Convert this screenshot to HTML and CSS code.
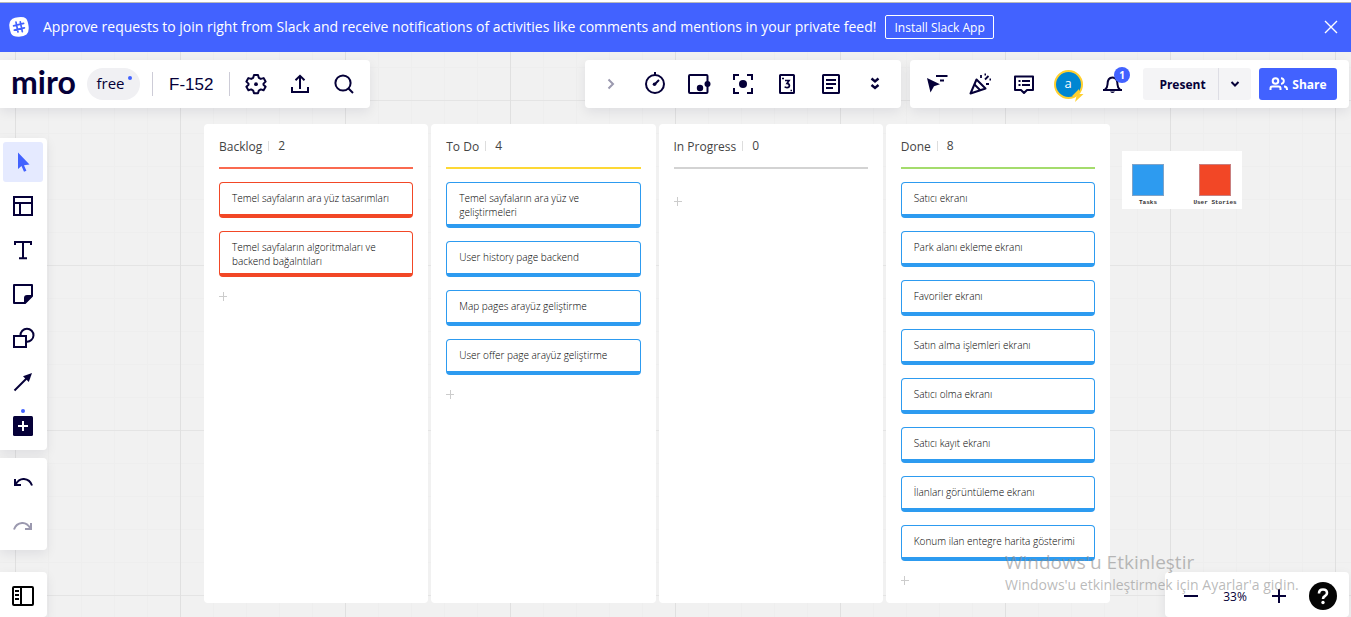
FILE: index.html
```html
<!DOCTYPE html>
<html lang="tr">
<head>
<meta charset="utf-8">
<title>F-152</title>
<link rel="stylesheet" href="styles.css">
</head>
<body>
<div class="banner">
  <svg class="banner-logo" viewBox="0 0 20 20"><path d="M6 .8Q14-.9 17 1.4 18.600 3 19.400 8 20.600 15 17.500 17.500 15 19.200 10 19.800 4 20 2 16.500.3 12 .2 8 .3 2.500 6 .8Z" fill="#fff"/><path d="M7 5.200l2 9.800M11.300 4.800l2 9.800M4.600 8.800l10-2.400M5.400 13.200l10-2.400" stroke="#4262ff" stroke-width="1.700" stroke-linecap="round" fill="none"/></svg>
  <p class="banner-text">Approve requests to join right from Slack and receive notifications of activities like comments and mentions in your private feed!</p>
  <button class="banner-action">Install Slack App</button>
  <button class="banner-close" aria-label="Close"><svg viewBox="0 0 14 14"><path d="M1 1l12 12M13 1L1 13" stroke="#fff" stroke-width="1.400"/></svg></button>
</div>
<main class="stage">
  <section class="board">
    <article class="column">
      <h2 class="column-head">Backlog<span class="count">2</span></h2>
      <div class="cards red">
        <div class="card">Temel sayfaların ara yüz tasarımları</div>
        <div class="card">Temel sayfaların algoritmaları ve backend bağalntıları</div>
      </div>
      <button class="add" aria-label="Add card"></button>
    </article>
    <article class="column">
      <h2 class="column-head yellow">To Do<span class="count">4</span></h2>
      <div class="cards">
        <div class="card">Temel sayfaların ara yüz ve geliştirmeleri</div>
        <div class="card">User history page backend</div>
        <div class="card">Map pages arayüz geliştirme</div>
        <div class="card">User offer page arayüz geliştirme</div>
      </div>
      <button class="add" aria-label="Add card"></button>
    </article>
    <article class="column">
      <h2 class="column-head grey">In Progress<span class="count">0</span></h2>
      <div class="cards"></div>
      <button class="add" aria-label="Add card"></button>
    </article>
    <article class="column">
      <h2 class="column-head green">Done<span class="count">8</span></h2>
      <div class="cards">
        <div class="card">Satıcı ekranı</div>
        <div class="card">Park alanı ekleme ekranı</div>
        <div class="card">Favoriler ekranı</div>
        <div class="card">Satın alma işlemleri ekranı</div>
        <div class="card">Satıcı olma ekranı</div>
        <div class="card">Satıcı kayıt ekranı</div>
        <div class="card">İlanları görüntüleme ekranı</div>
        <div class="card">Konum ilan entegre harita gösterimi</div>
      </div>
      <button class="add" aria-label="Add card"></button>
    </article>
  </section>
  <figure class="legend">
    <div class="legend-item"><span class="swatch"></span>Tasks</div>
    <div class="legend-item"><span class="swatch swatch-red"></span>User Stories</div>
  </figure>

  <div class="chrome">
    <header class="topbar">
      <div class="panel board-info">
        <a class="logo" href="#">miro</a>
        <button class="plan">free<i class="dot"></i></button>
        <span class="rule"></span>
        <button class="board-name">F-152</button>
        <span class="rule"></span>
        <div class="tools">
          <button class="tool" aria-label="Settings"><svg viewBox="0 0 24 24"><path d="M10 3h4l.8 2.800 2 1.100 2.800-.8 2 3.500-2.100 2v1.200l2.100 2-2 3.400-2.800-.8-2 1.200L14 21.300h-4l-.8-2.700-2-1.200-2.800.8-2-3.400 2.100-2v-1.200l-2.100-2 2-3.500 2.800.8 2-1.100Z" stroke-linejoin="round"/><circle cx="12" cy="12.200" r="1.900" class="solid"/></svg></button>
          <button class="tool" aria-label="Export"><svg viewBox="0 0 24 24"><path d="M4 15v5h16v-5M12 17V4M7.500 8.200L12 3.800l4.500 4.400"/></svg></button>
          <button class="tool" aria-label="Search"><svg viewBox="0 0 24 24"><circle cx="11" cy="11" r="7.600"/><path d="M16.500 16.500l4.500 4.500"/></svg></button>
        </div>
      </div>
      <div class="panel center-tools">
        <button class="tool muted" aria-label="Collapse"><svg viewBox="0 0 24 24"><path d="M9.500 7.500L14 12l-4.500 4.500"/></svg></button>
        <button class="tool" aria-label="Timer"><svg viewBox="0 0 24 24"><circle cx="12" cy="12" r="9"/><path d="M12 0v3M12 12l4-4"/><circle cx="11.500" cy="12.300" r="1.800" class="solid"/></svg></button>
        <button class="tool" aria-label="Voting"><svg viewBox="0 0 24 24"><rect x="2" y="3" width="18.500" height="18" rx="1"/><circle cx="13" cy="16" r="3.200" class="solid"/><circle cx="20.500" cy="12" r="3" class="solid"/></svg></button>
        <button class="tool" aria-label="Focus"><svg viewBox="0 0 24 24"><path d="M3 8V3h5M16 3h5v5M21 16v5h-5M8 21H3v-5"/><circle cx="12" cy="12" r="4" class="solid"/></svg></button>
        <button class="tool" aria-label="Estimation"><svg viewBox="0 0 24 24"><rect x="5" y="3" width="14" height="18" rx=".5"/><path d="M10 8.500h4l-2 3q2.400.2 2.400 2.100 0 2.100-2.400 2.100-1.700 0-2.200-1" stroke-width="1.700"/><path d="M7 6.500h2M15.500 18.500h1.500" stroke-width="1.500"/></svg></button>
        <button class="tool" aria-label="Notes"><svg viewBox="0 0 24 24"><rect x="4" y="3" width="16" height="18" rx=".5"/><path d="M7 8h10M7 12h10M7 16h7"/></svg></button>
        <button class="tool" aria-label="More tools"><svg viewBox="0 0 24 24"><path d="M8.500 6.500L12 9.500l3.500-3M8.500 13l3.500 3 3.500-3" stroke-width="2.400"/></svg></button>
      </div>
      <div class="panel right-tools">
        <button class="tool" aria-label="Cursors"><svg viewBox="0 0 24 24"><path class="solid" d="M3 6l13 6.200-6 2L6.500 20.500Z"/><path d="M12 4h11.500M16 8.500h4"/></svg></button>
        <button class="tool" aria-label="Reactions"><svg viewBox="0 0 24 24"><path d="M8.500 7.500l9 9L2.500 21.500Z" stroke-linejoin="round"/><path d="M6.500 12.500l6 6"/><path d="M13 6V3M17 7.500L20.500 4M18 12h3M21.500 7.500h1.500M16.500 2.500h1.500" stroke-width="1.800"/></svg></button>
        <button class="tool" aria-label="Comments"><svg viewBox="0 0 24 24"><path d="M3 4.500h18v13.500h-6l-3 3-3-3H3Z" stroke-linejoin="round"/><path d="M6.500 9h2M10 9h8M6.500 13h2M10 13h8"/></svg></button>
        <button class="tool" aria-label="Profile"><span class="avatar">a</span><svg class="bolt" viewBox="0 0 12 13"><path d="M7 0L0 7h4.500L3 13l8.500-8H7Z" fill="#ffd02f"/></svg></button>
        <button class="tool" aria-label="Notifications"><svg viewBox="0 0 24 24"><path d="M3 18h19M5 17.500q2.500-2 2.500-5 0-7 5-7 5 0 5 7 0 3 2.500 5"/><path d="M10 19.500h5q-2.500 3-5 0Z" class="solid"/></svg><span class="badge">1</span></button>
        <div class="present"><button class="present-main">Present</button><button class="present-more" aria-label="Present options"><svg viewBox="0 0 10 8"><path d="M1.500 2L5 5.500 8.500 2" fill="none" stroke="#050038" stroke-width="2"/></svg></button></div>
        <button class="share"><svg viewBox="0 0 20 16"><circle cx="6.500" cy="5" r="2.800"/><path d="M1.500 14v-1.500q0-2 2-2h6q2 0 2 2V14M12 2.200a2.800 2.800 0 1 1 0 5.600M15 10.500q3 0 3 3V14"/></svg>Share</button>
      </div>
    </header>
    <div class="lower">
      <nav class="side">
        <div class="panel stack">
          <button class="tool active" aria-label="Select"><svg viewBox="0 0 24 24"><path d="M7 2.500V19l3.500-3 2.500 5.800 2.400-1L13 15.200l5.500-.7Z" fill="#4262ff" stroke="none"/></svg></button>
          <button class="tool" aria-label="Templates"><svg viewBox="0 0 24 24"><rect x="3" y="3" width="18" height="18"/><path d="M3 9h18M9 9v12"/></svg></button>
          <button class="tool" aria-label="Text"><svg viewBox="0 0 24 24"><path d="M4 7V4h16v3M12 4v16M8 20.200h8"/></svg></button>
          <button class="tool" aria-label="Sticky note"><svg viewBox="0 0 24 24"><path d="M3 3h18v11l-7 7H3Z" stroke-linejoin="round"/><path class="solid" d="M13 21v-5q0-3 3-3h5.500L14 21.500Z"/></svg></button>
          <button class="tool" aria-label="Shapes"><svg viewBox="0 0 24 24"><rect x="3" y="10" width="12" height="11"/><path d="M9.500 9.500a6.500 6.500 0 1 1 6 6.200"/></svg></button>
          <button class="tool" aria-label="Line"><svg viewBox="0 0 24 24"><path d="M3.500 20.500L17 7"/><path class="solid" d="M21 3l-9 3.200 5.800 5.800Z"/></svg></button>
          <button class="tool" aria-label="More apps"><svg viewBox="0 0 24 24"><rect class="solid" x="2" y="2" width="20" height="20" rx="1.500"/><path d="M12 7v10M7 12h10" stroke="#fff"/></svg><i class="dot"></i></button>
        </div>
        <div class="panel stack">
          <button class="tool" aria-label="Undo"><svg viewBox="0 0 24 24"><path d="M4 9v6h6M4.500 14.500Q8 8.500 13 9q6 .5 8 6.500"/></svg></button>
          <button class="tool muted" aria-label="Redo"><svg viewBox="0 0 24 24"><path d="M20 9v6h-6M19.500 14.500Q16 8.500 11 9q-6 .5-8 6.500"/></svg></button>
        </div>
        <div class="panel stack docked">
          <button class="tool black" aria-label="Frames"><svg viewBox="0 0 24 24"><rect x="2" y="3" width="20" height="18" rx="1"/><path d="M10 3v18M4 7h4M4 11h4M4 15h4"/></svg></button>
        </div>
      </nav>
      <div class="panel zoom">
        <button class="tool" aria-label="Zoom out"><svg viewBox="0 0 24 24"><path d="M5 12h14"/></svg></button>
        <button class="tool zoom-value">33%</button>
        <button class="tool" aria-label="Zoom in"><svg viewBox="0 0 24 24"><path d="M5 12h14M12 5v14"/></svg></button>
        <button class="tool" aria-label="Help"><svg class="help" viewBox="0 0 28 28"><circle cx="14" cy="14" r="14" fill="#050505" stroke="none"/><path d="M10 11.500q0-4 4-4 4 0 4 3.500 0 2-2 3-2 1-2 3" stroke="#fff" stroke-width="2.600"/><circle cx="14" cy="20.500" r="1.700" fill="#fff" stroke="none"/></svg></button>
      </div>
    </div>
  </div>
  <aside class="activation"><p class="activation-title">Windows'u Etkinleştir</p><p class="activation-note">Windows'u etkinleştirmek için Ayarlar'a gidin.</p></aside>
</main>
</body>
</html>
```
FILE: styles.css
```css
* { box-sizing: border-box; }
body {
  margin: 0;
  height: 100vh;
  display: flex;
  flex-direction: column;
  overflow: hidden;
  font-family: "Open Sans", "Noto Sans", sans-serif;
  color: #050038;
}
button { font: inherit; color: inherit; border: 0; background: none; padding: 0; cursor: pointer; }
p, h2, figure { margin: 0; }

.banner {
  display: flex;
  align-items: center;
  height: 52px;
  padding: 0 13px 0 9px;
  border-top: 2px solid #fff;
  background: #4262ff;
  box-shadow: inset 0 1px #b9b9b9;
  color: #fff;
}
.banner-logo { width: 20px; height: 20px; margin-right: 14px; }
.banner-text { font-size: 14px; line-height: 20px; white-space: nowrap; }
.banner-action {
  height: 24px;
  margin-left: 9px;
  padding: 0 8px;
  border: 1px solid #fff;
  border-radius: 2px;
  font-size: 12px;
  white-space: nowrap;
}
.banner-close { margin-left: auto; width: 14px; height: 14px; display: flex; }

.stage {
  position: relative;
  flex: 1;
  overflow: hidden;
  background-color: #f1f1f1;
  background-image:
    linear-gradient(90deg, #e0e0e0 1px, transparent 1px),
    linear-gradient(#e4e4e4 1px, transparent 1px),
    linear-gradient(90deg, #eee 1px, transparent 1px),
    linear-gradient(#eee 1px, transparent 1px);
  background-size: 165px 165px, 165px 165px, 33px 33px, 33px 33px;
  background-position: 15px 48px;
}

.board {
  position: absolute;
  left: 204px;
  top: 72px;
  width: 906px;
  height: 479px;
  display: grid;
  grid-template-columns: repeat(4, 1fr);
  gap: 3px;
}
.column { padding: 12px 15px; background: #fff; border-radius: 4px; }
.column-head {
  display: flex;
  align-items: center;
  height: 33px;
  padding-bottom: 11px;
  border-bottom: 2px solid #fa6a50;
  font-size: 12px;
  font-weight: 400;
  color: #444;
}
.yellow { border-color: #fdd835; }
.grey { border-color: #d3d3d3; }
.green { border-color: #a4dc6c; }
.count { margin-left: 6px; padding-left: 9px; line-height: 10px; border-left: 1px solid #ddd; }
.cards { display: flex; flex-direction: column; gap: 13px; padding-top: 13px; }
.card {
  min-height: 36px;
  padding: 8px 12px 5px;
  border: 1px solid #2d9bf0;
  border-bottom-width: 4px;
  border-radius: 4px;
  font-size: 10px;
  font-weight: 300;
  line-height: 14px;
  color: #000;
}
.red .card { border-color: #f24726; }
.add { display: block; margin-top: 15px; width: 8px; height: 9px;
  background:
    linear-gradient(#ccc, #ccc) center / 9px 1px no-repeat,
    linear-gradient(#ccc, #ccc) center / 1px 9px no-repeat;
}

.legend {
  position: absolute;
  left: 1122px;
  top: 99px;
  width: 120px;
  height: 58px;
  padding: 13px 1px 0 0;
  display: flex;
  justify-content: space-between;
  background: #fff;
  font: bold 6px/8px "Liberation Mono", monospace;
  color: #333;
}
.legend-item { display: flex; flex-direction: column; align-items: center; gap: 3px; width: 52px; white-space: nowrap; }
.swatch { width: 32px; height: 32px; background: #2d9bf0; border: 1px solid #7fa3c8; }
.swatch-red { background: #f24726; border-color: #c97f7f; }

.chrome { position: absolute; inset: 0; display: flex; flex-direction: column; padding-right: 2px; }
.topbar { display: flex; padding-top: 8px; }
.panel { background: #fff; border-radius: 4px; box-shadow: 0 4px 12px rgba(5, 0, 56, 0.08); }
.board-info, .center-tools, .right-tools { display: flex; align-items: center; height: 48px; padding: 0 4px; }
.board-info { padding-left: 11px; border-radius: 0 4px 4px 0; }
.center-tools { margin-left: auto; }
.right-tools { margin-left: 9px; padding-right: 12px; }
.tools { display: flex; }
.logo { width: 76px; font: 700 32px/40px Lato, sans-serif; color: #050038; text-decoration: none; padding-bottom: 5px; }
.plan { position: relative; width: 53px; height: 32px; padding: 0 6px 2px 0; border-radius: 16px; background: #f0f0f3; font-size: 15px; font-weight: 500; }
.dot { position: absolute; width: 4px; height: 4px; border-radius: 50%; background: #4262ff; }
.plan .dot { right: 8px; top: 8px; }
.rule { width: 1px; height: 24px; background: #cdccd7; margin: 0 4px 0 12px; }
.board-name { width: 60px; height: 32px; font: 17px/32px "Liberation Sans", Arial, sans-serif; text-align: left; padding: 1px 0 0 12px; white-space: nowrap; }
.tool { position: relative; width: 44px; height: 40px; display: flex; align-items: center; justify-content: center; border-radius: 3px; }
.tool svg { width: 24px; height: 24px; fill: none; stroke: #050038; stroke-width: 2; }
.tool .solid { fill: #050038; stroke: none; }
.tool.muted svg { stroke: #9b99af; }
.tool.black svg { stroke: #000; }
.avatar { width: 29px; height: 29px; border: 2px solid #ffd02f; border-radius: 50%; background: #0086d2; color: #fff; font-size: 13px; line-height: 23px; }
.tool .bolt { position: absolute; right: 6px; bottom: 2px; width: 12px; height: 13px; stroke: none; }
.badge { position: absolute; right: 4px; top: 3px; width: 16px; height: 16px; border-radius: 50%; background: #4262ff; color: #fff; font-size: 10px; font-weight: 700; line-height: 16px; }
.present { display: flex; height: 32px; margin-left: 9px; background: #f4f4f6; border-radius: 3px; font-size: 12px; font-weight: 700; }
.present-main { width: 76px; padding-left: 4px; border-right: 1px solid #dedee5; }
.present-more { width: 32px; display: flex; align-items: center; justify-content: center; }
.present-more svg { width: 10px; height: 8px; }
.share { width: 78px; height: 32px; margin-left: 8px; display: flex; align-items: center; justify-content: center; gap: 3px; border-radius: 3px; background: #4262ff; color: #fff; font-size: 12px; font-weight: 700; }
.share svg { width: 20px; height: 16px; fill: none; stroke: #fff; stroke-width: 2; }

.lower { flex: 1; display: flex; justify-content: space-between; align-items: flex-end; }
.side { align-self: stretch; display: flex; flex-direction: column; gap: 8px; padding-top: 30px; }
.stack { display: flex; flex-direction: column; gap: 4px; padding: 4px 4px 4px 3px; border-radius: 0 4px 4px 0; }
.stack .tool { width: 40px; }
.active { background: #e5eaff; }
.stack .dot { top: 3px; }
.docked { margin-top: auto; padding-bottom: 1px; }
.zoom { display: flex; padding: 4px 4px 1px; }
.zoom-value { font-size: 12px; }
.tool .help { width: 28px; height: 28px; }

.activation { position: absolute; left: 1005px; bottom: 22px; color: rgba(140, 140, 140, 0.6); white-space: nowrap; pointer-events: none; }
.activation-title { font-size: 19px; line-height: 26px; }
.activation-note { font-size: 14px; line-height: 20px; }
```
